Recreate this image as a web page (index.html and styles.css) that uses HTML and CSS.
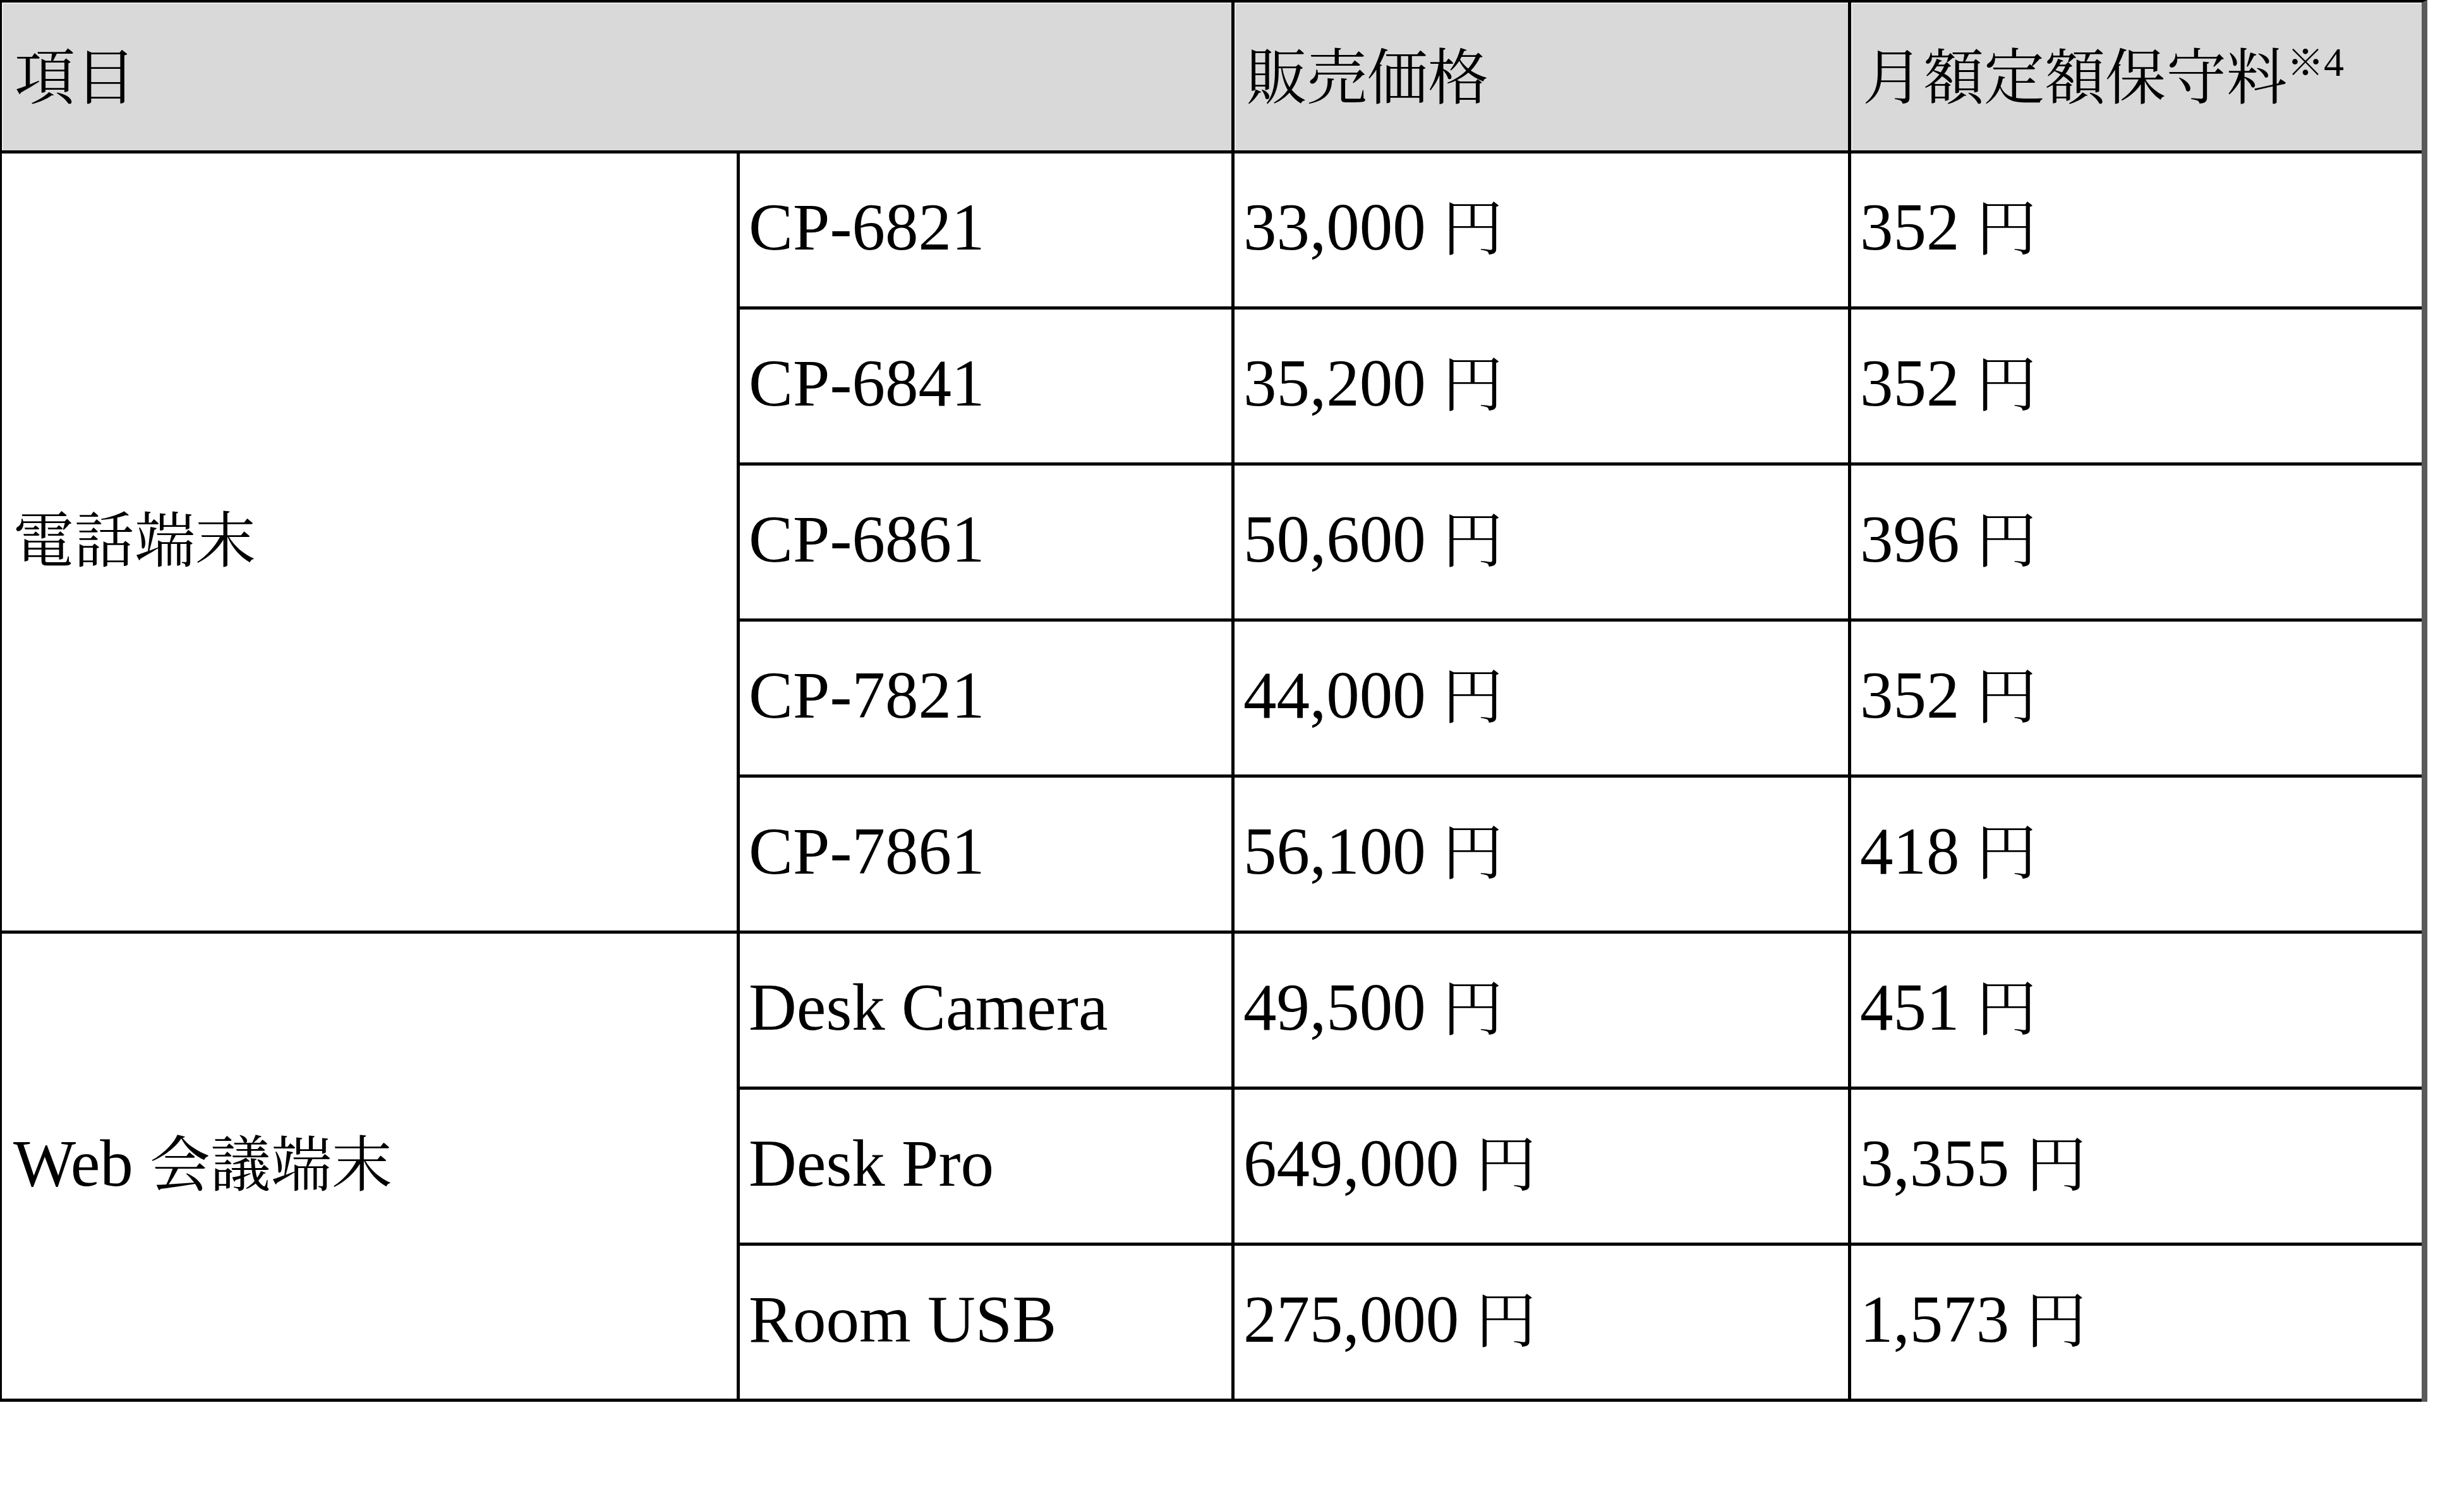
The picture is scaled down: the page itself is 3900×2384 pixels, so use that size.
FILE: index.html
```html
<!DOCTYPE html>
<html lang="ja">
<head>
<meta charset="utf-8">
<title>価格表</title>
<link rel="stylesheet" href="styles.css">
</head>
<body>
<table class="price-table">
  <colgroup>
    <col class="col1">
    <col class="col2">
    <col class="col3">
    <col class="col4">
  </colgroup>
  <thead>
    <tr class="head-row">
      <th class="c1" colspan="2"><span class="ja">項目</span></th>
      <th class="c3"><span class="ja">販売価格</span></th>
      <th class="c4"><span class="ja">月額定額保守料</span><span class="note"><span class="ja">※</span>4</span></th>
    </tr>
  </thead>
  <tbody>
    <tr class="row">
      <td class="c1" rowspan="5"><span class="ja">電話端末</span></td>
      <td class="c2">CP-6821</td>
      <td class="c3">33,000 <span class="ja">円</span></td>
      <td class="c4">352 <span class="ja">円</span></td>
    </tr>
    <tr class="row">
      <td class="c2">CP-6841</td>
      <td class="c3">35,200 <span class="ja">円</span></td>
      <td class="c4">352 <span class="ja">円</span></td>
    </tr>
    <tr class="row">
      <td class="c2">CP-6861</td>
      <td class="c3">50,600 <span class="ja">円</span></td>
      <td class="c4">396 <span class="ja">円</span></td>
    </tr>
    <tr class="row">
      <td class="c2">CP-7821</td>
      <td class="c3">44,000 <span class="ja">円</span></td>
      <td class="c4">352 <span class="ja">円</span></td>
    </tr>
    <tr class="row">
      <td class="c2">CP-7861</td>
      <td class="c3">56,100 <span class="ja">円</span></td>
      <td class="c4">418 <span class="ja">円</span></td>
    </tr>
    <tr class="row">
      <td class="c1" rowspan="3">Web <span class="ja">会議端末</span></td>
      <td class="c2">Desk Camera</td>
      <td class="c3">49,500 <span class="ja">円</span></td>
      <td class="c4">451 <span class="ja">円</span></td>
    </tr>
    <tr class="row">
      <td class="c2">Desk Pro</td>
      <td class="c3">649,000 <span class="ja">円</span></td>
      <td class="c4">3,355 <span class="ja">円</span></td>
    </tr>
    <tr class="row">
      <td class="c2">Room USB</td>
      <td class="c3">275,000 <span class="ja">円</span></td>
      <td class="c4">1,573 <span class="ja">円</span></td>
    </tr>
  </tbody>
</table>
</body>
</html>
```
FILE: styles.css
```css
html, body {
  margin: 0;
  padding: 0;
  background: #ffffff;
}

body {
  font-family: "Liberation Serif", "Times New Roman", "Noto Serif CJK JP", "Noto Sans CJK JP", serif;
  color: #000;
}

.price-table {
  table-layout: fixed;
  border-collapse: separate;
  border-spacing: 0;
  width: 3842px;
  border-top: 4px solid #000;
  border-left: 3px solid #000;
  border-right: 9px solid #5a5a5a;
  font-size: 105px;
  line-height: 1.15;
}

.col1 { width: 1168px; }
.col2 { width: 783px; }
.col3 { width: 976px; }
.col4 { width: 903px; }

.price-table th,
.price-table td {
  box-sizing: border-box;
  padding: 0 0 0 14px;
  text-align: left;
  vertical-align: middle;
  font-weight: normal;
  border-right: 5px solid #000;
  border-bottom: 5px solid #000;
  white-space: nowrap;
}

.price-table td {
  padding-bottom: 8px;
}

.price-table .c4 {
  border-right: none;
}

.head-row {
  height: 239px;
}

.head-row th {
  background: #d9d9d9;
  box-shadow: inset 2px 2px 0 #ececec;
  padding-left: 18px;
}

.head-row .c1 {
  padding-left: 20px;
}

.row {
  height: 247px;
}

.price-table td.c1 {
  padding-left: 18px;
}

.ja {
  font-family: "Noto Serif CJK JP", "Noto Sans CJK JP", serif;
  font-size: 96px;
}

.note {
  font-size: 64px;
  vertical-align: 36px;
  line-height: 1;
}

.note .ja {
  font-size: 58px;
}
```
